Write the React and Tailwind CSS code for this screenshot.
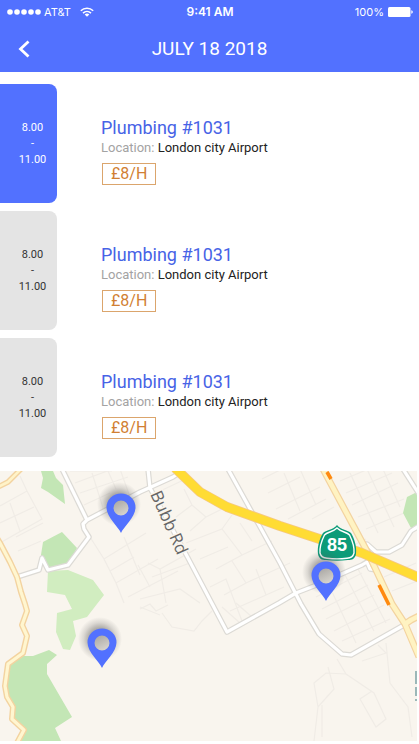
import { useState } from 'react';
import clsx from 'clsx';

const jobs = [
  { id: 1, title: 'Plumbing #1031', location: 'London city Airport', rate: '£8/H', from: '8.00', to: '11.00' },
  { id: 2, title: 'Plumbing #1031', location: 'London city Airport', rate: '£8/H', from: '8.00', to: '11.00' },
  { id: 3, title: 'Plumbing #1031', location: 'London city Airport', rate: '£8/H', from: '8.00', to: '11.00' }
];

const pins = [
  { id: 1, x: 121, y: 62 },
  { id: 2, x: 326, y: 130 },
  { id: 3, x: 102, y: 197 }
];

const sideStreets = [
  'M0 35L27 20L42 48L0 72M27 20L20 5M0 52L34 36M10 32L20 60M16 66L43 52M18 80L41 70',
  'M70 0L112 0M75 12L118 -4M80 22L128 6M92 2L104 40M108 0L116 18M120 -2L130 26M84 34L110 22',
  'M90 66L104 88L146 62M104 88L116 112L158 88M116 112L124 132M124 66L140 104M110 100L134 86M128 126L178 100M138 94L150 116',
  'M148 92L160 98L196 78M152 106L190 92L204 120M160 98L166 132M140 128L180 118L200 132M140 138L150 133L156 140L168 134',
  'M156 22L190 6M176 46L192 34L206 46L190 60M192 34L184 18M206 46L226 36M186 72L222 58L242 84L216 98M222 58L232 44M200 88L228 76M232 90L246 112L224 124M242 84L272 70M246 112L290 92M210 116L226 108L242 150M252 70L240 52M256 98L266 124L230 140M266 124L284 116',
  'M268 22L300 6M276 38L320 16M262 8L282 -2M284 2L300 40M300 -2L316 34M288 48L326 28M312 48L334 36',
  'M340 10L378 -6M346 22L392 2M352 34L398 12M358 46L404 28M366 58L404 42M350 2L378 62M366 -4L394 56M382 -4L400 36',
  'M316 126L362 102M322 138L368 114M326 148L374 124M334 160L384 134M342 170L390 148M326 108L356 172M344 102L374 160M358 98L386 152M384 106L416 92M392 120L417 110M366 68L350 76',
  'M162 142L172 156L194 160L202 150L212 140M222 136L240 152M236 132L252 146M140 136L160 144',
  'M337 188L346 203L374 222L386 248L376 256L360 228L372 220M346 203L326 202L314 212L318 236L334 218L328 196M318 236L314 270M322 234L322 266M386 172L390 212L408 236L412 266M362 190L386 182L378 174'
];

const minorRoads = [
  'M62 -2L87 49',
  'M184 -1L173 6L140 21L87 49L83 53L84 58L89 66L68 94L48 99L42 87L39 99L17 106',
  'M148 -2L150 17L188 87L227 161L279 132L296 122L314 115L362 94L367 91L370 98L376 99',
  'M228 -2L280 92L301 133L319 163L342 183L351 184L404 154',
  'M362 74L367 73L376 81L389 81L402 74L411 60L419 55',
  'M403 -2L419 23'
];

const leftRoad =
  'M-3 67L0 72L10 91L17 106L21 121L25 133L27 140L22 154L27 165L23 182L8 193L5 215L7 226L13 236L12 248L24 259L17 272';
const eastRoad = 'M323 -2L369 84L392 133L405 153L419 186M405 153L411 149L419 145';
const highway = 'M175 -3L200 21L227 36L280 55L362 82L420 107';

function StatusBar() {
  return (
    <div className="grid h-6 grid-cols-3 items-center pl-[7px] pr-1.5 font-['Inter',sans-serif] text-[11px] leading-4 text-white">
      <div className="flex items-center gap-[3px]">
        <svg className="h-1.5 w-[34px]" viewBox="0 0 34 6" fill="currentColor" aria-hidden="true">
          <circle cx="3" cy="3" r="2.8" />
          <circle cx="10" cy="3" r="2.8" />
          <circle cx="17" cy="3" r="2.8" />
          <circle cx="24" cy="3" r="2.8" />
          <circle cx="31" cy="3" r="2.8" />
        </svg>
        <span>AT&amp;T</span>
        <svg className="ml-1.5 h-2.5 w-3.5" viewBox="0 0 14 10" aria-hidden="true">
          <g fill="none" stroke="currentColor" strokeWidth="1.5">
            <path d="M0.8 3.8C4.3 0.3 9.7 0.3 13.2 3.8" />
            <path d="M3 6.1C5.3 3.9 8.7 3.9 11 6.1" />
          </g>
          <path d="M4.7 7.4C6 6.3 8 6.3 9.3 7.4L7 9.8Z" fill="currentColor" />
        </svg>
      </div>
      <span className="text-center text-[12px] font-semibold">9:41 AM</span>
      <div className="flex items-center justify-end gap-1">
        <span>100%</span>
        <svg className="h-2.5 w-[25px]" viewBox="0 0 25 10" fill="currentColor" aria-hidden="true">
          <rect width="22.5" height="10" rx="1.5" />
          <path d="M23.3 3.2C25.3 3.6 25.3 6.4 23.3 6.8Z" />
        </svg>
      </div>
    </div>
  );
}

function Header() {
  return (
    <header className="bg-[#5271ff]">
      <StatusBar />
      <div className="grid h-12 grid-cols-[48px_1fr_48px] items-center pt-0.5 text-white">
        <button type="button" aria-label="Back" className="flex h-11 items-center justify-center">
          <svg className="h-[18px] w-3" viewBox="0 0 12 18" fill="none" stroke="currentColor" strokeWidth="2.8" aria-hidden="true">
            <path d="M10.5 1.5L2.5 9L10.5 16.5" />
          </svg>
        </button>
        <h1 className="text-center text-[19px] leading-6">JULY 18 2018</h1>
      </div>
    </header>
  );
}

function JobRow({ job, active, onSelect }) {
  return (
    <li className="flex gap-11">
      <button
        type="button"
        aria-pressed={active}
        onClick={onSelect}
        className={clsx(
          'flex h-[119px] w-[57px] shrink-0 flex-col items-center justify-center rounded-r-lg pl-2 text-[11px] leading-4',
          active ? 'bg-[#5271ff] text-white' : 'bg-[#e4e4e4] text-[#333333]'
        )}
      >
        <span>{job.from}</span>
        <span>-</span>
        <span>{job.to}</span>
      </button>
      <div className="min-w-0 pt-[34px]">
        <h2 className="text-[18px] leading-5 text-[#4763e6]">{job.title}</h2>
        <p className="text-[13px] leading-5 text-[#222222]">
          <span className="text-[#a3a3a3]">Location:</span> {job.location}
        </p>
        <p className="ml-px mt-[5px] inline-block border border-[#dba56c] px-2 text-[16px] leading-5 text-[#d17f33]">
          {job.rate}
        </p>
      </div>
    </li>
  );
}

function Pin({ x, y }) {
  return (
    <g transform={`translate(${x} ${y})`}>
      <circle cx="-2" cy="-29" r="22" fill="url(#pinShadow)" />
      <circle cy="-25" r="8" fill="url(#pinHole)" />
      <path
        fill="#5271ff"
        fillRule="evenodd"
        d="M0 0C-2.5 -6 -14.5 -16 -14.5 -25.5A14.5 14 0 0 1 14.5 -25.5C14.5 -16 2.5 -6 0 0ZM0 -32.5A7.5 7.5 0 1 0 0 -17.5A7.5 7.5 0 1 0 0 -32.5Z"
      />
    </g>
  );
}

function JobMap() {
  return (
    <svg className="block aspect-[417/270] w-full" viewBox="0 0 417 270" role="img" aria-label="Job locations map">
      <defs>
        <radialGradient id="pinShadow">
          <stop offset="0" stopColor="#555555" stopOpacity="0.6" />
          <stop offset="0.5" stopColor="#555555" stopOpacity="0.45" />
          <stop offset="0.75" stopColor="#555555" stopOpacity="0.18" />
          <stop offset="1" stopColor="#555555" stopOpacity="0" />
        </radialGradient>
        <linearGradient id="pinHole" x1="0" y1="0" x2="0.5" y2="1">
          <stop offset="0" stopColor="#a5a39f" />
          <stop offset="1" stopColor="#d6d3cd" />
        </linearGradient>
      </defs>
      <rect width="417" height="270" fill="#f9f5ee" />

      <g fill="none" stroke="#f0ece6" strokeWidth="1.2">
        {sideStreets.map((d) => (
          <path key={d} d={d} />
        ))}
      </g>

      {/* parks */}
      <g fill="#c3e6b5">
        <path d="M41 0L53 0L56 7L63 14L65 33L48 21L41 17L43 7Z" />
        <path d="M43 71L62 61L77 77L68 94L48 98L41 84Z" />
        <path d="M8 194L23 185L33 185L49 179L57 184L47 193L47 203L72 246L55 257L61 270L18 270L24 259L12 248L13 236L5 215Z" />
        <path d="M417 21L407 26L403 42L411 57L417 54Z" />
      </g>
      <path
        fill="#d1edc0"
        d="M48 100L68 99L93 109L104 124L97 133L87 146L73 150L76 165L70 179L63 178L56 161L57 142L72 138L65 124L47 121Z"
      />

      <g fill="none" strokeLinejoin="round">
        <g stroke="#dcdad5" strokeWidth="5.6">
          {minorRoads.map((d) => (
            <path key={d} d={d} />
          ))}
        </g>
        <g stroke="#ffffff" strokeWidth="3.2">
          {minorRoads.map((d) => (
            <path key={d} d={d} />
          ))}
        </g>
        <path d="M21 -2L8 11L-2 16" stroke="#f3d3a0" strokeWidth="5.5" />
        <path d="M21 -2L8 11L-2 16" stroke="#fff3c8" strokeWidth="2.6" />
        <path d={leftRoad} stroke="#f3d3a0" strokeWidth="6" />
        <path d={leftRoad} stroke="#fff6d0" strokeWidth="3.2" />
        <path d={eastRoad} stroke="#f3d3a0" strokeWidth="7" />
        <path d={eastRoad} stroke="#fff3c2" strokeWidth="4.6" />
        <path d={highway} stroke="#f5c884" strokeWidth="10" />
        <path d={highway} stroke="#ffdc34" strokeWidth="8.4" />
        <path d="M327 1L331 8M379 114L389 134" stroke="#ff8a0f" strokeWidth="3.6" />
      </g>

      <text
        transform="translate(150 23) rotate(66)"
        fill="#666666"
        stroke="#f9f5ee"
        strokeWidth="3"
        paintOrder="stroke"
        className="font-['Open_Sans',sans-serif] text-[17px] font-medium"
      >
        Bubb Rd
      </text>

      {/* route 85 shield */}
      <g>
        <path
          d="M337 54C341 59 348 59 351 62C354 67 357 75 356 83C355 88 352 89 348 89C341 90 333 90 326 89C322 89 319 88 318 83C317 75 320 67 323 62C326 59 333 59 337 54Z"
          fill="#0d9b78"
        />
        <path
          d="M337 57C341 61 347 61 349.500 64C352 69 354.500 76 354 82C353 86 351 87 347 87.300C341 88 333 88 327 87.300C323 87 321 86 320 82C319.500 76 322 69 324.500 64C327 61 333 61 337 57Z"
          fill="none"
          stroke="#ffffff"
          strokeWidth="1.4"
        />
        <text x="337" y="80" textAnchor="middle" fill="#ffffff" className="font-['Liberation_Sans',sans-serif] text-[18px] font-bold">
          85
        </text>
      </g>

      {pins.map((pin) => (
        <Pin key={pin.id} x={pin.x} y={pin.y} />
      ))}

      <path d="M416 200V213M416 216V225M416 228V230" stroke="#86a9aa" strokeWidth="1.6" />
    </svg>
  );
}

export default function App() {
  const [selected, setSelected] = useState(1);

  return (
    <div className="bg-white font-['Roboto',sans-serif]">
      <Header />
      <main>
        <ul className="flex flex-col gap-2 pb-3.5 pt-3">
          {jobs.map((job) => (
            <JobRow key={job.id} job={job} active={job.id === selected} onSelect={() => setSelected(job.id)} />
          ))}
        </ul>
        <div className="pb-[3px] pr-0.5">
          <JobMap />
        </div>
      </main>
    </div>
  );
}
